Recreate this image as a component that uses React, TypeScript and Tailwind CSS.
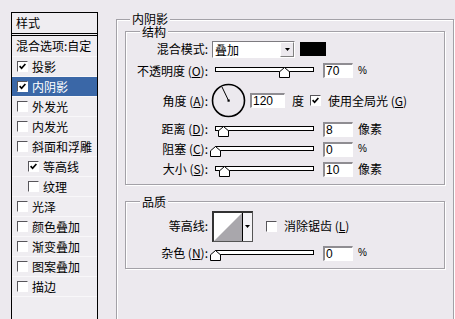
import React from "react";

function Check({ checked }: { checked?: boolean }) {
  return (
    <span className="w-[11px] h-[11px] shrink-0 border-t border-l border-t-[#57555a] border-l-[#57555a] border-b border-r border-b-white border-r-white bg-white flex items-center justify-center">
      {checked && (
        <svg width="7" height="7" viewBox="0 0 7 7">
          <path d="M0.6 3.2 L2.6 5.3 L6.4 1" stroke="#000" strokeWidth="1.7" fill="none" />
        </svg>
      )}
    </span>
  );
}

function Item({ label, checked, sub, selected }: { label: string; checked?: boolean; sub?: boolean; selected?: boolean }) {
  return (
    <div className={"h-[20px] border-b border-[#f8f7f9] flex items-center " + (sub ? "pl-[16px]" : "pl-[5px]")}>
      <div className={"flex items-center h-full flex-1 " + (selected ? "bg-[#3a67a7] text-white -ml-[5px] pl-[5px]" : "")}>
        <Check checked={checked} />
        <span className="ml-[4px] whitespace-nowrap">{label}</span>
      </div>
    </div>
  );
}

function Slider({ pos }: { pos: number }) {
  return (
    <div className="relative w-[104px] h-[11px] mt-[4px] shrink-0">
      <div className="absolute left-[5px] top-0 w-[99px] h-[5px] border border-black bg-white" />
      <svg className="absolute top-0" style={{ left: pos }} width="11" height="11" viewBox="0 0 11 11">
        <polygon points="5.5,0.5 10.5,4.8 10.5,10.5 0.5,10.5 0.5,4.8" fill="#fff" stroke="#000" strokeWidth="1" />
      </svg>
    </div>
  );
}

function Num({ v, className }: { v: string; className: string }) {
  return (
    <div
      className={
        "h-[15px] shrink-0 border-t-2 border-l-2 border-t-[#8f8d92] border-l-[#8f8d92] border-b border-r border-b-white border-r-white bg-white pl-[1px] font-['Liberation_Sans',sans-serif] text-[12px] leading-[12px] " +
        className
      }
    >
      {v}
    </div>
  );
}

function Label({ children }: { children: React.ReactNode }) {
  return <div className="w-[82px] shrink-0 text-right whitespace-nowrap">{children}</div>;
}

function Pct() {
  return <span className="ml-[5px] font-['Liberation_Sans',sans-serif] text-[10px] leading-[12px]">%</span>;
}

function Unit() {
  return <span className="ml-[5px]">像素</span>;
}

function Arrow() {
  return (
    <svg width="5" height="3" viewBox="0 0 5 3">
      <polygon points="0,0 5,0 2.5,3" fill="#000" />
    </svg>
  );
}

export default function App() {
  const bg = "bg-[#ece9ee]";
  return (
    <div className={"w-[455px] h-[319px] overflow-hidden flex text-[12px] leading-[14px] text-black font-['Noto_Sans_CJK_SC','Liberation_Sans',sans-serif] " + bg}>
      {/* left list */}
      <div className="ml-[11px] mt-[12px] w-[87px] h-[320px] shrink-0 border-t border-x border-black bg-[#efedf1] overflow-hidden">
        <div className="h-[23px] border-b-[3px] border-double border-black flex items-center pl-[4px]">样式</div>
        <div className="h-[21px] border-b border-[#f8f7f9] flex items-center pl-[4px] whitespace-nowrap">混合选项:自定</div>
        <Item label="投影" checked />
        <Item label="内阴影" checked selected />
        <Item label="外发光" />
        <Item label="内发光" />
        <Item label="斜面和浮雕" />
        <Item label="等高线" checked sub />
        <Item label="纹理" sub />
        <Item label="光泽" />
        <Item label="颜色叠加" />
        <Item label="渐变叠加" />
        <Item label="图案叠加" />
        <Item label="描边" />
      </div>

      {/* right outer group */}
      <div className="ml-[18px] mt-[19px] w-[338px] h-[320px] shrink-0 border border-[#a3a1a7] shadow-[inset_1px_1px_0_#fff,1px_1px_0_#fff]">
        <div className={"ml-[13px] -mt-[8px] px-[2px] w-fit h-[13px] leading-[13px] " + bg}>内阴影</div>

        {/* 结构 */}
        <div className="ml-[8px] mt-[6px] w-[320px] border border-[#a3a1a7] shadow-[inset_1px_1px_0_#fff,1px_1px_0_#fff] pb-[5px]">
          <div className={"ml-[14px] -mt-[6px] px-[2px] w-fit h-[12px] leading-[12px] " + bg}>结构</div>

          <div className="h-[21px] pt-[1px] flex items-center">
            <Label>混合模式:</Label>
            <div className="ml-[4px] w-[83px] h-[17px] flex border-t border-l border-t-[#7d7b80] border-l-[#7d7b80] border-b border-r border-b-white border-r-white bg-white">
              <span className="pl-[2px] leading-[15px]">叠加</span>
              <div className="ml-auto w-[14px] h-full bg-[#ece9ee] border-t border-l border-t-white border-l-white border-b border-r border-b-[#808080] border-r-[#808080] flex items-center justify-center">
                <Arrow />
              </div>
            </div>
            <div className="ml-[5px] w-[26px] h-[14px] bg-black" />
          </div>

          <div className="h-[23px] flex items-center">
            <Label>
              不透明度 (<u>O</u>):
            </Label>
            <div className="ml-[2px]" />
            <Slider pos={69} />
            <Num v="70" className="ml-[9px] w-[30px]" />
            <Pct />
          </div>

          <div className="h-[37px] flex items-center">
            <Label>
              角度 (<u>A</u>):
            </Label>
            <svg className="ml-[3px] shrink-0" width="35" height="35" viewBox="0 0 35 35">
              <circle cx="17.5" cy="17.5" r="16" fill="none" stroke="#000" strokeWidth="1.6" />
              <line x1="17.5" y1="17.5" x2="11" y2="4" stroke="#000" strokeWidth="1" />
              <rect x="16.5" y="16.5" width="2.2" height="2.2" fill="#000" />
            </svg>
            <Num v="120" className="ml-[4px] w-[35px]" />
            <span className="ml-[7px]">度</span>
            <span className="ml-[6px]">
              <Check checked />
            </span>
            <span className="ml-[7px] whitespace-nowrap">
              使用全局光 (<u>G</u>)
            </span>
          </div>

          <div className="h-[20px] flex items-center">
            <Label>
              距离 (<u>D</u>):
            </Label>
            <div className="ml-[2px]" />
            <Slider pos={8} />
            <Num v="8" className="ml-[9px] w-[30px]" />
            <Unit />
          </div>

          <div className="h-[20px] flex items-center">
            <Label>
              阻塞 (<u>C</u>):
            </Label>
            <div className="ml-[2px]" />
            <Slider pos={0} />
            <Num v="0" className="ml-[9px] w-[30px]" />
            <Pct />
          </div>

          <div className="h-[20px] flex items-center">
            <Label>
              大小 (<u>S</u>):
            </Label>
            <div className="ml-[2px]" />
            <Slider pos={9} />
            <Num v="10" className="ml-[9px] w-[30px]" />
            <Unit />
          </div>
        </div>

        {/* 品质 */}
        <div className="ml-[8px] mt-[16px] w-[320px] border border-[#a3a1a7] shadow-[inset_1px_1px_0_#fff,1px_1px_0_#fff] pb-[5px]">
          <div className={"ml-[14px] -mt-[6px] px-[2px] w-fit h-[12px] leading-[12px] " + bg}>品质</div>

          <div className="h-[35px] pt-[1px] flex items-center">
            <Label>等高线:</Label>
            <div className="ml-[4px] w-[41px] h-[31px] flex shrink-0 border-t-2 border-l-2 border-t-[#333] border-l-[#333] border-b border-r border-b-[#555] border-r-[#555]">
              <svg width="28" height="28" viewBox="0 0 28 28" className="shrink-0">
                <rect width="28" height="28" fill="#fff" />
                <polygon points="0,28 28,0 28,28" fill="#a9a7ac" />
              </svg>
              <div className="w-[10px] h-full border-l border-black bg-[#f4f3f6] flex items-center justify-center">
                <Arrow />
              </div>
            </div>
            <span className="ml-[13px]">
              <Check />
            </span>
            <span className="ml-[7px] whitespace-nowrap">
              消除锯齿 (<u>L</u>)
            </span>
          </div>

          <div className="h-[20px] flex items-center">
            <Label>
              杂色 (<u>N</u>):
            </Label>
            <div className="ml-[2px]" />
            <Slider pos={0} />
            <Num v="0" className="ml-[9px] w-[30px]" />
            <Pct />
          </div>
        </div>
      </div>
    </div>
  );
}
